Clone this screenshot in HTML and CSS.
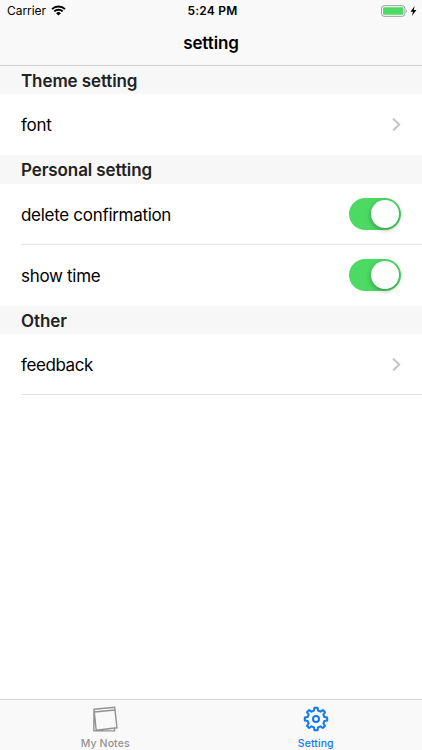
FILE: index.html
```
<!DOCTYPE html>
<html lang="en">
	<head>
		<meta charset="utf-8">
		<title>setting</title>
		<link rel="stylesheet" href="styles.css">
	</head>
	<body>
		<header>
			<div class="status">
				<div class="carrier">
					<span>Carrier</span>
					<svg class="wifi" width="15" height="11" viewBox="0 0 15 11">
						<path d="M1 4.1A9.3 9.3 0 0 1 14 4.1M3.3 6.4A6 6 0 0 1 11.7 6.4" fill="none" stroke="#000" stroke-width="1.9"/>
						<path d="M7.5 10.5L5.1 8.2A3.4 3.4 0 0 1 9.9 8.2Z"/>
					</svg>
				</div>
				<div class="clock">5:24 PM</div>
				<div class="power">
					<svg width="37" height="12" viewBox="0 0 37 12">
						<rect x="0.5" y="0.7" width="23.4" height="10.6" rx="2.7" fill="#fff" stroke="#9b9b9b"/>
						<rect x="2" y="2.2" width="20.4" height="7.6" rx="1.2" fill="#4cd964"/>
						<path d="M25.2 4.2Q26.8 6 25.2 7.8Z" fill="#888"/>
						<path d="M33.6 1L29.5 6.7H32L30.9 11L35.4 5.1H32.7Z"/>
					</svg>
				</div>
			</div>
			<h1>setting</h1>
		</header>
		<main>
			<h2 class="theme">Theme setting</h2>
			<div class="row last">
				<span class="font">font</span>
				<svg class="arrow" width="9" height="15" viewBox="0 0 9 15"><path d="M1 1.5L7.2 7.5L1 13.5"/></svg>
			</div>
			<h2 class="personal">Personal setting</h2>
			<div class="row">
				<span class="delete">delete confirmation</span>
				<div class="switch"></div>
			</div>
			<div class="row last">
				<span class="time">show time</span>
				<div class="switch"></div>
			</div>
			<h2 class="other">Other</h2>
			<div class="row feedback">
				<span>feedback</span>
				<svg class="arrow" width="9" height="15" viewBox="0 0 9 15"><path d="M1 1.5L7.2 7.5L1 13.5"/></svg>
			</div>
		</main>
		<nav>
			<a class="tab">
				<svg width="26" height="26" viewBox="0 0 26 26">
					<path d="M2 3.3L22.7 1.3L25 21.8L4.2 24.2ZM2.3 6L23 4M2 3.3L1.8 24.9H22.6V22.3"/>
				</svg>
				<span>My Notes</span>
			</a>
			<a class="tab active">
				<svg width="26" height="26" viewBox="-13 -13 26 26">
					<path d="M-1.6-11.2H1.6L2-8.4L4.5-7.35L6.8-9.05L9.05-6.8L7.35-4.5L8.4-2L11.2-1.6V1.6L8.4 2L7.35 4.5L9.05 6.8L6.8 9.05L4.5 7.35L2 8.4L1.6 11.2H-1.6L-2 8.4L-4.5 7.35L-6.8 9.05L-9.05 6.8L-7.35 4.5L-8.4 2L-11.2 1.6V-1.6L-8.4-2L-7.35-4.5L-9.05-6.8L-6.8-9.05L-4.5-7.35L-2-8.4Z"/>
					<circle r="3"/>
				</svg>
				<span>Setting</span>
			</a>
		</nav>
	</body>
</html>
```

FILE: styles.css
```
*
{
	box-sizing: border-box;
}
body
{
	margin: 0;
	height: 750px;
	display: flex;
	flex-direction: column;
	overflow: hidden;
	background-color: #fff;
	color: #000;
	font-family: Inter, "Liberation Sans", sans-serif;
}
header
{
	height: 66px;
	background-color: #f9f9f9;
	border-bottom: 1px solid #d4d4d5;
}
.status
{
	display: grid;
	grid-template-columns: 1fr auto 1fr;
	align-items: center;
	height: 21px;
	padding: 0 4px 0 7px;
	font-size: 12px;
}
.carrier
{
	display: flex;
	align-items: center;
	gap: 5px;
	letter-spacing: -0.05px;
}
.clock
{
	font-weight: 600;
	letter-spacing: 0.2px;
}
.power
{
	display: flex;
	justify-content: flex-end;
}
h1
{
	margin: 0;
	text-align: center;
	font-size: 17px;
	font-weight: 600;
	line-height: 45px;
	letter-spacing: -0.1px;
}
main
{
	flex: 1;
}
h2
{
	margin: 0;
	height: 29px;
	padding-left: 21px;
	background-color: #f7f7f7;
	color: #222;
	font-size: 17px;
	font-weight: 600;
	line-height: 30px;
	letter-spacing: -0.1px;
}
.theme, .other
{
	height: 28px;
}
.row
{
	display: flex;
	align-items: center;
	justify-content: space-between;
	height: 61px;
	margin-left: 21px;
	padding-right: 21px;
	border-bottom: 1px solid #e3e3e5;
	font-size: 17px;
	letter-spacing: -0.3px;
}
.row span
{
	padding-top: 1px;
}
.row.last
{
	border-bottom-color: transparent;
}
.row .font
{
	padding-top: 2px;
}
.feedback
{
	letter-spacing: -0.4px;
}
.feedback span
{
	padding-top: 2px;
}
.arrow path
{
	fill: none;
	stroke: #c4c4c9;
	stroke-width: 2;
}
.switch
{
	display: flex;
	justify-content: flex-end;
	width: 52px;
	height: 32px;
	padding: 2px;
	border-radius: 16px;
	background-color: #4cd964;
}
.switch:after
{
	content: "";
	width: 28px;
	height: 28px;
	border-radius: 50%;
	background-color: #fff;
	box-shadow: 0 2px 5px rgba(0, 0, 0, 0.3);
}
nav
{
	display: flex;
	height: 51px;
	padding-right: 1px;
	background-color: #f9f9f9;
	border-top: 1px solid #d4d4d5;
}
.tab
{
	flex: 1;
	display: flex;
	flex-direction: column;
	align-items: center;
	padding-top: 6px;
	color: #929292;
	font-size: 10.5px;
	font-weight: 500;
	line-height: 13px;
	letter-spacing: 0.1px;
}
.tab svg
{
	margin-bottom: 5px;
	fill: none;
	stroke: #929292;
	stroke-width: 1.4;
}
.active
{
	color: #1279ee;
}
.tab.active svg
{
	stroke: #1279ee;
	stroke-width: 2;
	stroke-linejoin: round;
}
```
